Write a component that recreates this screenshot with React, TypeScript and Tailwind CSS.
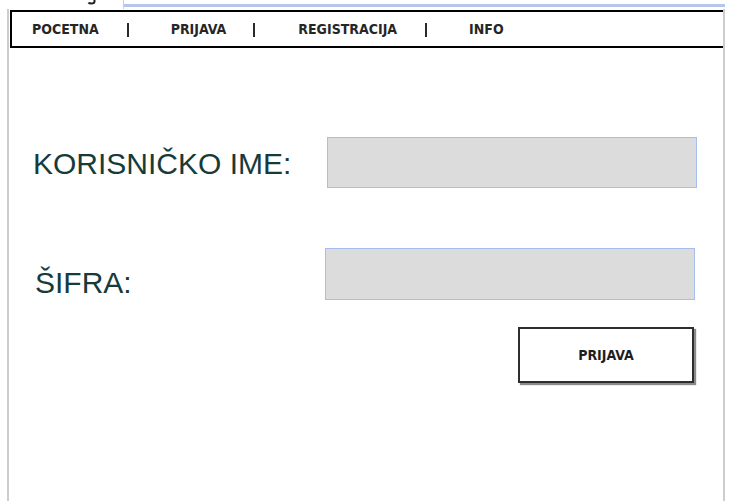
import React from "react";

const navFont = { fontFamily: '"DejaVu Sans Condensed", "DejaVu Sans", sans-serif' };
const labelFont = { fontFamily: '"Liberation Sans", Arial, sans-serif' };

function NavItem({ children }: { children: React.ReactNode }) {
  return <span className="text-[14px] font-bold text-[#262626] leading-none">{children}</span>;
}

function Pipe() {
  return <span className="block w-[2px] h-[14px] mt-[2px] bg-[#2a2a2a]" />;
}

export default function App() {
  return (
    <div className="w-[734px] h-[501px] bg-white overflow-hidden flex flex-col">
      {/* top window strip */}
      <div className="h-[9px] flex shrink-0">
        <div className="w-[123px] pl-[87px]">
          <svg width="10" height="5" viewBox="0 0 10 5" className="block">
            <path d="M7.5 0 V1.5 Q7.5 3.5 4.5 3.5 Q2 3.5 1.5 2.5" fill="none" stroke="#222" strokeWidth="2" />
          </svg>
        </div>
        <div className="w-[602px] border-l border-[#cfcfcf] pt-[4px]">
          <div className="h-[3px] bg-[#b4c6ea]" />
        </div>
      </div>

      {/* body */}
      <div className="ml-[7px] w-[718px] flex-1 border-l-2 border-r-2 border-[#cdcdcd] flex flex-col">
        {/* nav */}
        <div
          className="mt-[1px] ml-[1px] h-[38px] border-t-2 border-l-2 border-b-2 border-black flex items-center pl-[20px]"
          style={navFont}
        >
          <NavItem>POCETNA</NavItem>
          <span className="ml-[28px]"><Pipe /></span>
          <span className="ml-[42px]"><NavItem>PRIJAVA</NavItem></span>
          <span className="ml-[27px]"><Pipe /></span>
          <span className="ml-[43px]"><NavItem>REGISTRACIJA</NavItem></span>
          <span className="ml-[28px]"><Pipe /></span>
          <span className="ml-[42px]"><NavItem>INFO</NavItem></span>
        </div>

        {/* row 1 */}
        <div className="mt-[89px] flex items-start" style={labelFont}>
          <div className="ml-[24px] w-[294px] mt-[12px] text-[30px] leading-none text-[#173b3b]">
            KORISNIČKO IME:
          </div>
          <div className="w-[370px] h-[51px] bg-[#dcdcdc] border border-[#a6bdf0]" />
        </div>

        {/* row 2 */}
        <div className="mt-[60px] flex items-start" style={labelFont}>
          <div className="ml-[26px] w-[290px] mt-[20px] text-[30px] leading-none text-[#173b3b]">
            ŠIFRA:
          </div>
          <div className="w-[370px] h-[52px] bg-[#dcdcdc] border border-[#a6bdf0]" />
        </div>

        {/* button */}
        <div className="mt-[27px] flex">
          <button
            className="ml-[509px] w-[176px] h-[56px] border-2 border-[#2e2e2e] bg-white shadow-[2px_2px_1px_#8a8a8a] flex items-center justify-center text-[14px] font-bold text-[#1e1e1e]"
            style={navFont}
          >
            PRIJAVA
          </button>
        </div>
      </div>
    </div>
  );
}
